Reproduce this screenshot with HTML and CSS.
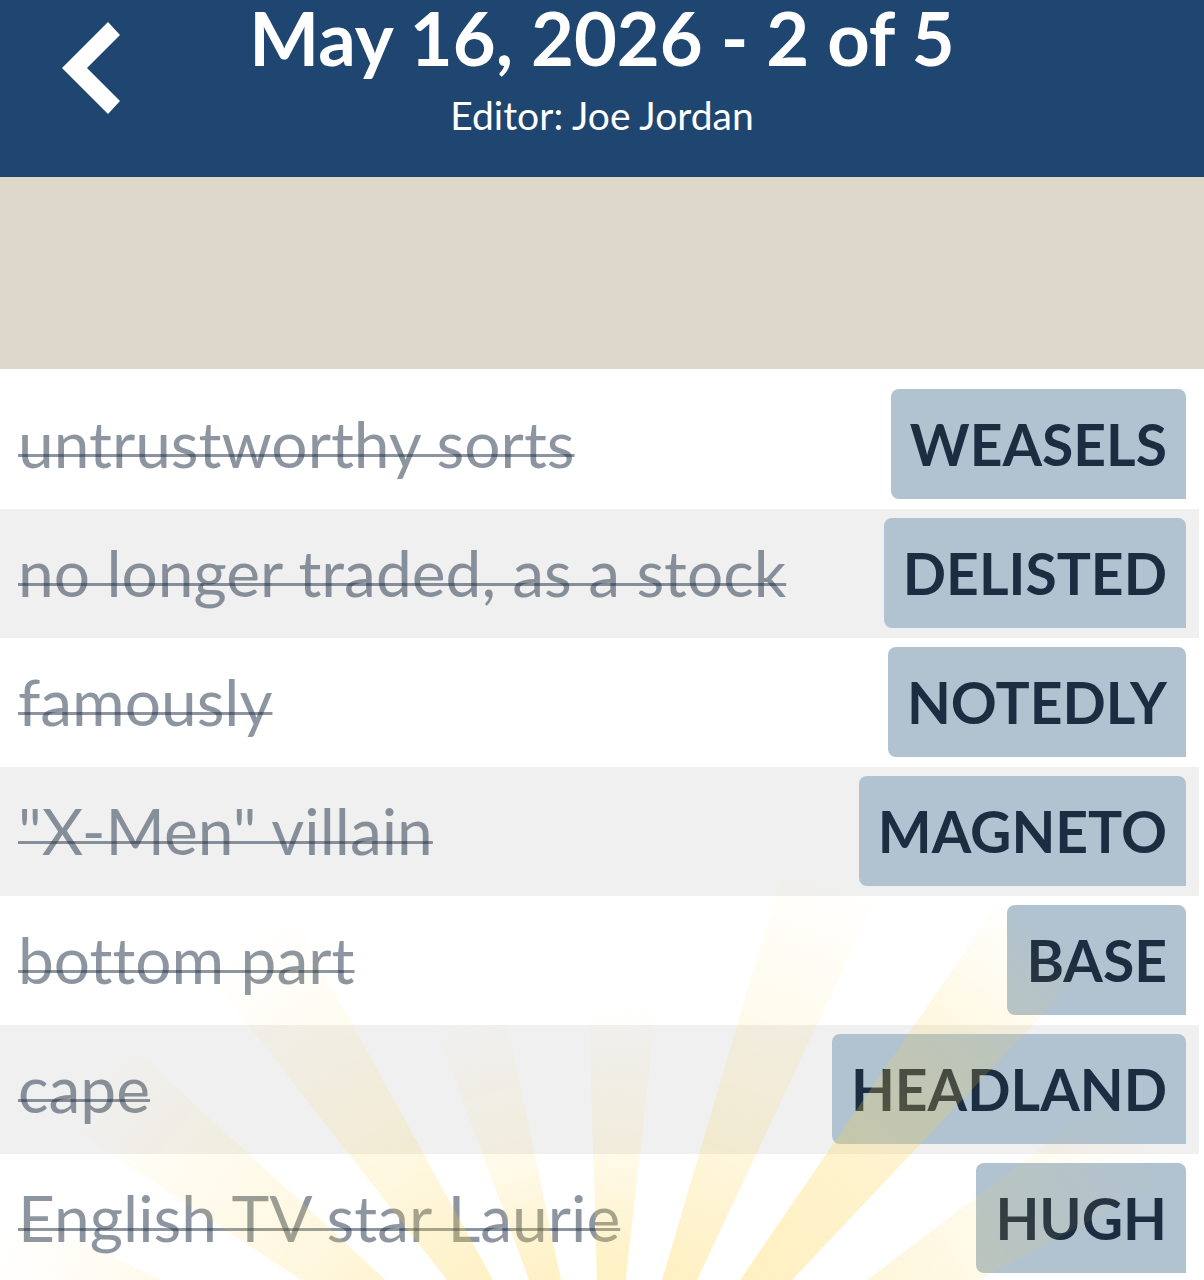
FILE: index.html
```html
<!DOCTYPE html>
<html lang="en">
<head>
    <meta charset="UTF-8">
    <meta name="viewport" content="width=device-width, initial-scale=1">
    <title>May 16, 2026 - 2 of 5</title>
    <link rel="stylesheet" href="styles.css">
</head>
<body>
    <header class="header">
        <button class="back" type="button" aria-label="Back">
            <svg viewBox="0 0 58 92" width="58" height="92">
                <path d="M46 0 L58 13 L25 46 L58 79 L46 92 L0 46 Z" fill="#fff"/>
            </svg>
        </button>
        <div class="heading">
            <h1 class="title">May 16, 2026 - 2 of 5</h1>
            <p class="editor">Editor: Joe Jordan</p>
        </div>
    </header>
    <div class="banner"></div>

    <main>
        <ul class="clues">
            <li class="clue"><s class="clue-text">untrustworthy sorts</s><span class="answer">WEASELS</span></li>
            <li class="clue"><s class="clue-text">no longer traded, as a stock</s><span class="answer">DELISTED</span></li>
            <li class="clue"><s class="clue-text">famously</s><span class="answer">NOTEDLY</span></li>
            <li class="clue"><s class="clue-text">"X-Men" villain</s><span class="answer">MAGNETO</span></li>
            <li class="clue"><s class="clue-text">bottom part</s><span class="answer">BASE</span></li>
            <li class="clue"><s class="clue-text">cape</s><span class="answer">HEADLAND</span></li>
            <li class="clue"><s class="clue-text">English TV star Laurie</s><span class="answer">HUGH</span></li>
        </ul>
    </main>

    <!-- sun rays over the list -->
    <svg class="rays" viewBox="0 0 1204 400" aria-hidden="true">
        <defs>
            <radialGradient id="long" gradientUnits="userSpaceOnUse" cx="603" cy="600" r="710">
                <stop offset="0.3" stop-color="#fdd244" stop-opacity="0.34"/>
                <stop offset="0.6" stop-color="#fdd244" stop-opacity="0.26"/>
                <stop offset="0.8" stop-color="#fdd244" stop-opacity="0.16"/>
                <stop offset="1" stop-color="#fdd244" stop-opacity="0"/>
            </radialGradient>
            <radialGradient id="short" gradientUnits="userSpaceOnUse" cx="603" cy="600" r="650">
                <stop offset="0.3" stop-color="#fdd244" stop-opacity="0.34"/>
                <stop offset="0.55" stop-color="#fdd244" stop-opacity="0.18"/>
                <stop offset="0.75" stop-color="#fdd244" stop-opacity="0.1"/>
                <stop offset="1" stop-color="#fdd244" stop-opacity="0"/>
            </radialGradient>
            <radialGradient id="faint" gradientUnits="userSpaceOnUse" cx="603" cy="600" r="480">
                <stop offset="0.4" stop-color="#fdd244" stop-opacity="0.34"/>
                <stop offset="0.68" stop-color="#fdd244" stop-opacity="0.12"/>
                <stop offset="1" stop-color="#fdd244" stop-opacity="0"/>
            </radialGradient>
        </defs>
        <path d="M603 600 L-57 300 L-57 400 Z" fill="url(#short)"/>
        <path d="M603 600 L-303 0 L-49 0 Z" fill="url(#short)"/>
        <path d="M603 600 L135 0 L273 0 Z" fill="url(#short)"/>
        <path d="M603 600 L381 0 L477 0 Z" fill="url(#faint)"/>
        <path d="M603 600 L585 0 L671 0 Z" fill="url(#faint)"/>
        <path d="M603 600 L780 0 L885 0 Z" fill="url(#short)"/>
        <path d="M603 600 L1014 0 L1170 0 Z" fill="url(#long)"/>
        <path d="M603 600 L1395 0 L1731 0 Z" fill="url(#short)"/>
    </svg>
</body>
</html>
```
FILE: styles.css
```css
* {
    box-sizing: border-box;
}
body {
    font-family: Lato, "Open Sans", sans-serif;
    font-variant-ligatures: none;
    margin: 0;
    background: #fff;
    color: #1c2d42;
}
.header {
    display: grid;
    grid-template-columns: 180px 1fr 180px;
    align-items: start;
    height: 177px;
    background: #1f4670;
    color: #fff;
}
.back {
    display: flex;
    margin: 22px 0 0 62px;
    padding: 0;
    border: 0;
    background: none;
    cursor: pointer;
}
.back svg {
    display: block;
}
.heading {
    text-align: center;
}
.title {
    margin: 0;
    font-size: 74px;
    line-height: 76px;
    font-weight: bold;
    white-space: nowrap;
}
.editor {
    margin: 15px 0 0;
    font-size: 39px;
    line-height: 48px;
}
.banner {
    height: 192px;
    background: #ddd8ca;
}
.clues {
    list-style: none;
    margin: 0;
    padding: 11px 5px 0 0;
}
.clue {
    display: flex;
    align-items: center;
    justify-content: space-between;
    height: 129px;
    padding: 0 13px 2px 18px;
}
.clue:nth-child(even) {
    background: #f0f0f0;
}
.clue-text {
    font-size: 64px;
    line-height: 80px;
    color: rgba(28, 45, 66, 0.5);
    /* strike sits low on the letters, so it is set by offset */
    text-decoration: underline 3px rgba(28, 45, 66, 0.5);
    text-underline-offset: -14px;
    text-decoration-skip-ink: none;
}
.answer {
    padding: 0 19px;
    border-radius: 8px 8px 0 8px;
    background: #b1c3d1;
    font-size: 57px;
    line-height: 110px;
    font-weight: bold;
}
.rays {
    position: fixed;
    left: 0;
    bottom: 0;
    width: 100%;
    pointer-events: none;
}
```
